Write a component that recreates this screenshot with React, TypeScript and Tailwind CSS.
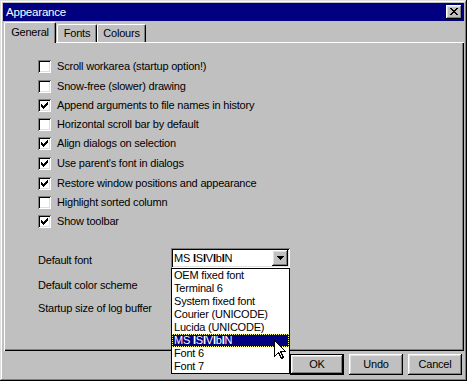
import React from "react";

const px = (rects: number[][], color = "#000") =>
  rects.map(([x, y, w, h], i) => <rect key={i} x={x} y={y} width={w} height={h} fill={color} />);

function CheckMark() {
  return (
    <svg width="7" height="7" viewBox="0 0 7 7" shapeRendering="crispEdges">
      {px([
        [6, 0, 1, 1],
        [5, 1, 2, 1],
        [0, 2, 1, 1],
        [4, 2, 3, 1],
        [0, 3, 2, 1],
        [3, 3, 3, 1],
        [0, 4, 5, 1],
        [1, 5, 3, 1],
        [2, 6, 1, 1],
      ])}
    </svg>
  );
}

function Check({ checked }: { checked: boolean }) {
  return (
    <div className="w-[13px] h-[13px] bg-white flex items-center justify-center shadow-[inset_1px_1px_0_#808080,inset_-1px_-1px_0_#ffffff,inset_2px_2px_0_#000000,inset_-2px_-2px_0_#dfdfdf]">
      {checked && <CheckMark />}
    </div>
  );
}

const options: { label: string; checked: boolean; h: string }[] = [
  { label: "Scroll workarea (startup option!)", checked: false, h: "h-[19px]" },
  { label: "Snow-free (slower) drawing", checked: false, h: "h-[20px]" },
  { label: "Append arguments to file names in history", checked: true, h: "h-[19px]" },
  { label: "Horizontal scroll bar by default", checked: false, h: "h-[19px]" },
  { label: "Align dialogs on selection", checked: true, h: "h-[19px]" },
  { label: "Use parent's font in dialogs", checked: true, h: "h-[20px]" },
  { label: "Restore window positions and appearance", checked: true, h: "h-[20px]" },
  { label: "Highlight sorted column", checked: false, h: "h-[19px]" },
  { label: "Show toolbar", checked: true, h: "h-[19px]" },
];

const bevel =
  "shadow-[inset_-1px_-1px_0_#000000,inset_1px_1px_0_#ffffff,inset_-2px_-2px_0_#808080,inset_2px_2px_0_#dfdfdf]";

function MsText() {
  return (
    <span>
      MS <span className="font-bold">I</span>S<span className="font-bold">I</span>V
      <span className="font-bold">I</span>b<span className="font-bold">I</span>N
    </span>
  );
}

function Button({ label, def }: { label: string; def?: boolean }) {
  if (def) {
    return (
      <div className="w-[54px] h-[21px] border border-black">
        <div className={`w-full h-full bg-[#c0c0c0] flex items-center justify-center ${bevel}`}>{label}</div>
      </div>
    );
  }
  return (
    <div className={`w-[54px] h-[21px] bg-[#c0c0c0] flex items-center justify-center ${bevel}`}>{label}</div>
  );
}

const listItems = [
  "OEM fixed font",
  "Terminal 6",
  "System fixed font",
  "Courier (UNICODE)",
  "Lucida (UNICODE)",
  "__MS__",
  "Font 6",
  "Font 7",
];

export default function App() {
  return (
    <div className="w-[467px] h-[381px] bg-[#c0c0c0] p-[3px] flex flex-col relative text-[11px] leading-[13px] tracking-[-0.2px] text-black font-['Liberation_Sans',Arial,sans-serif] shadow-[inset_-1px_-1px_0_#000000,inset_1px_1px_0_#dfdfdf,inset_-2px_-2px_0_#808080,inset_2px_2px_0_#ffffff] overflow-hidden">
      {/* Title bar */}
      <div className="h-[18px] bg-[#000080] flex items-center justify-between pl-[3px] pr-[2px]">
        <span className="text-white text-[11.5px]">Appearance</span>
        <div className={`w-[16px] h-[14px] bg-[#c0c0c0] flex items-center justify-center ${bevel}`}>
          <svg width="8" height="7" viewBox="0 0 8 7" shapeRendering="crispEdges" className="-mt-[1px]">
            {px([
              [0, 0, 2, 1],
              [6, 0, 2, 1],
              [1, 1, 2, 1],
              [5, 1, 2, 1],
              [2, 2, 4, 1],
              [3, 3, 2, 1],
              [2, 4, 4, 1],
              [1, 5, 2, 1],
              [5, 5, 2, 1],
              [0, 6, 2, 1],
              [6, 6, 2, 1],
            ])}
          </svg>
        </div>
      </div>

      {/* Tabs + panel */}
      <div className="pl-[1px] pr-0 flex flex-col">
        <div className="h-[21px] flex items-end">
          <div className="relative z-10 w-[52px] h-[21px] -mb-[1px] bg-[#c0c0c0] border-l border-t border-white border-r border-r-black rounded-t-[2px] shadow-[inset_-1px_0_0_#808080] flex items-start justify-center pt-[3px]">
            General
          </div>
          <div className="w-[40px] h-[18px] ml-[1px] bg-[#c0c0c0] border-l border-t border-white border-r border-r-black rounded-t-[2px] shadow-[inset_-1px_0_0_#808080] flex items-start justify-center pt-[2px]">
            Fonts
          </div>
          <div className="w-[49px] h-[18px] bg-[#c0c0c0] border-l border-t border-white border-r border-r-black rounded-t-[2px] shadow-[inset_-1px_0_0_#808080] flex items-start justify-center pt-[2px]">
            Colours
          </div>
        </div>
        <div className="h-[309px] w-[460px] shadow-[inset_1px_1px_0_#ffffff,inset_-1px_-1px_0_#000000,inset_-2px_-2px_0_#808080] pl-[34px] pt-[15px] flex flex-col">
          {options.map((o) => (
            <div key={o.label} className={`${o.h} flex items-center`}>
              <Check checked={o.checked} />
              <span className="ml-[6px]">{o.label}</span>
            </div>
          ))}
          <div className="mt-[17px] flex items-start h-[25px]">
            <span className="w-[133px] pt-[6px]">Default font</span>
            <div className="w-[119px] h-[20px] bg-white flex items-center justify-between shadow-[inset_1px_1px_0_#808080,inset_-1px_-1px_0_#ffffff,inset_2px_2px_0_#000000,inset_-2px_-2px_0_#dfdfdf] pl-[3px] pr-[2px]">
              <MsText />
              <div className={`w-[16px] h-[16px] bg-[#c0c0c0] flex items-center justify-center ${bevel}`}>
                <svg width="7" height="4" viewBox="0 0 7 4" shapeRendering="crispEdges">
                  {px([
                    [0, 0, 7, 1],
                    [1, 1, 5, 1],
                    [2, 2, 3, 1],
                    [3, 3, 1, 1],
                  ])}
                </svg>
              </div>
            </div>
          </div>
          <div className="h-[24px] flex items-start">
            <span className="pt-[6px]">Default color scheme</span>
          </div>
          <div className="h-[24px] flex items-start">
            <span className="pt-[5px]">Startup size of log buffer</span>
          </div>
        </div>
      </div>

      {/* Buttons */}
      <div className="mt-[3px] flex justify-end pr-[2px]">
        <Button label="OK" def />
        <div className="ml-[5px]">
          <Button label="Undo" />
        </div>
        <div className="ml-[5px]">
          <Button label="Cancel" />
        </div>
      </div>

      {/* Dropdown list overlay */}
      <div className="absolute left-[171px] top-[268px] w-[119px] h-[106px] bg-white border border-black z-20 flex flex-col">
        {listItems.map((it) =>
          it === "__MS__" ? (
            <div
              key={it}
              className="h-[13px] bg-[#000080] text-white border border-dotted border-[#ffff80] pl-[1px] flex items-center"
            >
              <MsText />
            </div>
          ) : (
            <div key={it} className="h-[13px] pl-[2px] flex items-center">
              {it}
            </div>
          )
        )}
      </div>

      {/* Mouse cursor */}
      <svg
        className="absolute left-[274px] top-[340px] z-30"
        width="13"
        height="20"
        viewBox="0 0 13 20"
        shapeRendering="crispEdges"
      >
        <path
          d="M0.5 0.5 L0.5 16.5 L4.5 12.5 L7.5 18.5 L9.5 17.5 L6.5 11.5 L11.5 11.5 Z"
          fill="#ffffff"
          stroke="#000000"
          strokeWidth="1"
        />
      </svg>
    </div>
  );
}
